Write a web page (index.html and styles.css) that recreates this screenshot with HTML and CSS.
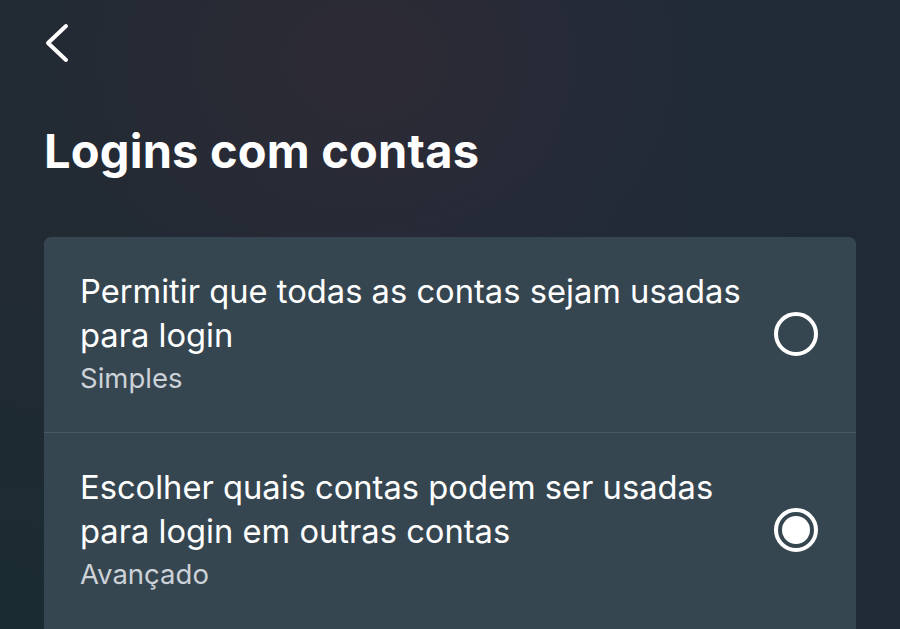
FILE: index.html
```html
<!DOCTYPE html>
<html lang="pt">
<head>
    <meta charset="UTF-8">
    <meta name="viewport" content="width=device-width, initial-scale=1.0">
    <title>Logins com contas</title>
    <link rel="stylesheet" href="styles.css">
</head>
<body>
    <div class="screen">
        <header class="topbar">
            <button class="back-btn" type="button" aria-label="Voltar">
                <svg width="26" height="42" viewBox="0 0 26 42">
                    <path d="M22 4 L4 21 L22 38" fill="none" stroke="#ffffff" stroke-width="4" stroke-linecap="round" stroke-linejoin="round"/>
                </svg>
            </button>
        </header>

        <h1 class="page-title">Logins com contas</h1>

        <div class="options-card">
            <label class="option">
                <div class="option-text">
                    <span class="option-title">Permitir que todas as contas sejam usadas para login</span>
                    <span class="option-sub">Simples</span>
                </div>
                <input type="radio" name="loginMode" value="simple">
                <span class="radio"></span>
            </label>

            <label class="option">
                <div class="option-text">
                    <span class="option-title">Escolher quais contas podem ser usadas para login em outras contas</span>
                    <span class="option-sub">Avançado</span>
                </div>
                <input type="radio" name="loginMode" value="advanced" checked>
                <span class="radio"></span>
            </label>
        </div>
    </div>
</body>
</html>
```

FILE: styles.css
```css
:root {
    --card: #364651;
    --divider: #4a5a65;
    --text: #ffffff;
    --text-muted: #ccd2d7;
}

* {
    margin: 0;
    padding: 0;
    box-sizing: border-box;
}

html, body {
    height: 100%;
}

body {
    font-family: Inter, "Noto Sans", sans-serif;
    color: var(--text);
    background:
        radial-gradient(ellipse 320px 260px at 360px 60px, rgba(70, 45, 50, 0.3), transparent),
        radial-gradient(ellipse 400px 400px at 0 629px, rgba(20, 45, 50, 0.5), transparent),
        linear-gradient(90deg, #222a33 0%, #232a38 60%, #1f2a36 100%);
    overflow: hidden;
}

.screen {
    padding: 0 44px;
}

.topbar {
    height: 88px;
    padding-top: 22px;
}

.back-btn {
    background: none;
    border: none;
    cursor: pointer;
    display: block;
}

.page-title {
    font-size: 47px;
    font-weight: 700;
    line-height: 1;
    margin-top: 39px;
    margin-bottom: 63px;
    letter-spacing: 0.2px;
}

/* card runs to the bottom of the screen */
.options-card {
    background-color: var(--card);
    border-radius: 7px 7px 0 0;
    overflow: hidden;
    min-height: 392px;
}

.option {
    display: flex;
    align-items: center;
    gap: 24px;
    padding: 32px 36px 33px 36px;
    cursor: pointer;
}

.option + .option {
    border-top: 1px solid var(--divider);
    padding-top: 32px;
}

.option-text {
    flex: 1;
    display: flex;
    flex-direction: column;
}

.option-title {
    font-size: 32.7px;
    line-height: 44px;
    max-width: 670px;
}

.option-sub {
    font-size: 27.5px;
    line-height: 42px;
    color: var(--text-muted);
}

.option input {
    display: none;
}

.radio {
    width: 44px;
    height: 44px;
    border: 4px solid #ffffff;
    border-radius: 50%;
    flex-shrink: 0;
    margin-right: 2px;
    position: relative;
}

.option input:checked + .radio::after {
    content: "";
    position: absolute;
    inset: 4px;
    border-radius: 50%;
    background-color: #ffffff;
}
```
